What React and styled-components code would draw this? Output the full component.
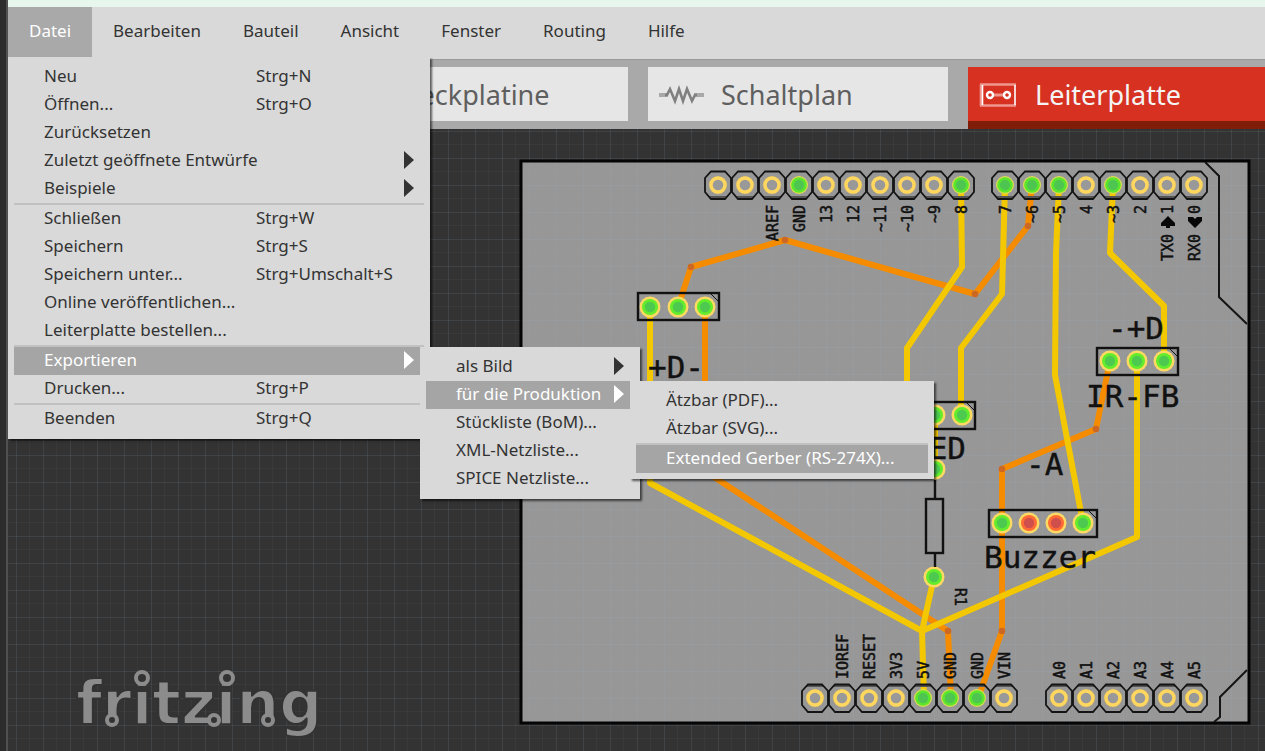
import React from 'react';
import styled, { createGlobalStyle, css } from 'styled-components';

const GlobalStyle = createGlobalStyle`
  * { box-sizing: border-box; }
  body {
    margin: 0;
    background: #2c2c2c;
    font-family: "Noto Sans", "Open Sans", sans-serif;
    font-size: 17px;
    line-height: 26px;
    color: #333;
  }
  button { font: inherit; color: inherit; border: 0; background: none; text-align: left; }
  ul { list-style: none; margin: 0; padding: 0; }
`;

const AppWindow = styled.div`
  display: flex;
  flex-direction: column;
  min-height: 100vh;
  margin-left: 6px;
  border-left: 2px solid #505050;
  overflow: hidden;
`;

const TitleStrip = styled.div`
  flex: none;
  height: 7px;
  background: #e8f7ed;
`;

const MenuBar = styled.nav`
  position: relative;
  z-index: 2;
  display: flex;
  flex: none;
  height: 52px;
  background: #d9d9d9;
`;

const MenuBarButton = styled.button`
  height: 50px;
  padding: 0 21px 2px 21px;
  ${(p) => p.$open && css`background: #a9a9a9; color: #fff;`}
`;

const MenuList = styled.ul`
  position: absolute;
  z-index: 1;
  top: ${(p) => (p.$root ? '50px' : '0')};
  left: ${(p) => (p.$root ? '0' : 'calc(100% - 4px)')};
  width: ${(p) => p.$width}px;
  padding: 6px;
  background: #d9d9d9;
  box-shadow: 2px 2px 2px rgba(0, 0, 0, 0.6);
`;

const MenuItem = styled.li`
  position: relative;
`;

const MenuButton = styled.button`
  display: flex;
  align-items: center;
  width: 100%;
  height: 28px;
  padding: 0 10px 2px 30px;
  white-space: nowrap;
  ${(p) => p.$active && css`background: #a5a5a5; color: #fff;`}
`;

const MenuLabel = styled.span`
  flex: ${(p) => (p.$fixed ? '0 0 212px' : '1')};
`;

const MenuDivider = styled.li`
  height: 2px;
  background: #c1c1c1;
`;

const TabBar = styled.div`
  display: flex;
  flex: none;
  gap: 20px;
  height: 70px;
  padding: 7px 0 0 320px;
  border-top: 1px solid #999;
  background: #a9a9a9;
`;

const Tab = styled.button`
  display: flex;
  align-items: center;
  flex: none;
  gap: 17px;
  width: 300px;
  height: 54px;
  padding: 2px 0 0 10px;
  background: #e6e6e6;
  color: #5f5f5f;
  font-size: 27px;
  ${(p) => p.$active && css`
    flex: 1 0 297px;
    height: 62px;
    border-bottom: 8px solid #801d09;
    background: #d63121;
    color: #f4f4f4;
  `}
`;

const Canvas = styled.main`
  position: relative;
  flex: 1;
  min-height: 600px;
  background: #333;
`;

const BoardDrawing = styled.svg`
  position: absolute;
  inset: 0;
  width: 100%;
  height: 100%;
`;

const Logo = styled.svg`
  position: absolute;
  left: 52px;
  bottom: 0;
`;

const Silk = styled.text`
  font-family: "DejaVu Sans Mono", monospace;
  font-size: ${(p) => (p.$small ? 15 : 31)}px;
  fill: #111;
  stroke: #111;
  stroke-width: ${(p) => (p.$small ? 0.5 : 0.4)};
`;

const Wordmark = styled.text`
  font-family: "DejaVu Sans", sans-serif;
  font-weight: bold;
  font-size: 60px;
  fill: #8c8c8c;
  stroke: #333;
  stroke-width: 2;
  stroke-linejoin: round;
`;

const productionMenu = [
  { label: 'Ätzbar (PDF)...' },
  { label: 'Ätzbar (SVG)...' },
  null,
  { label: 'Extended Gerber (RS-274X)...', active: true },
];

const exportMenu = [
  { label: 'als Bild', arrow: true },
  { label: 'für die Produktion', arrow: true, active: true, sub: productionMenu, subWidth: 304 },
  { label: 'Stückliste (BoM)...' },
  { label: 'XML-Netzliste...' },
  { label: 'SPICE Netzliste...' },
];

const fileMenu = [
  { label: 'Neu', keys: 'Strg+N' },
  { label: 'Öffnen...', keys: 'Strg+O' },
  { label: 'Zurücksetzen' },
  { label: 'Zuletzt geöffnete Entwürfe', arrow: true },
  { label: 'Beispiele', arrow: true },
  null,
  { label: 'Schließen', keys: 'Strg+W' },
  { label: 'Speichern', keys: 'Strg+S' },
  { label: 'Speichern unter...', keys: 'Strg+Umschalt+S' },
  { label: 'Online veröffentlichen...' },
  { label: 'Leiterplatte bestellen...' },
  null,
  { label: 'Exportieren', arrow: true, active: true, sub: exportMenu, subWidth: 220 },
  { label: 'Drucken...', keys: 'Strg+P' },
  null,
  { label: 'Beenden', keys: 'Strg+Q' },
];

function Menu({ items, width, root }) {
  return (
    <MenuList $width={width} $root={root}>
      {items.map((item, i) =>
        item ? (
          <MenuItem key={i}>
            <MenuButton $active={item.active}>
              <MenuLabel $fixed={Boolean(item.keys)}>{item.label}</MenuLabel>
              {item.keys && <span>{item.keys}</span>}
              {item.arrow && (
                <svg width="10" height="18" aria-hidden="true">
                  <path d="M0 0L10 9L0 18Z" fill="currentColor" />
                </svg>
              )}
            </MenuButton>
            {item.sub && <Menu items={item.sub} width={item.subWidth} />}
          </MenuItem>
        ) : (
          <MenuDivider key={i} />
        )
      )}
    </MenuList>
  );
}

const ResistorIcon = () => (
  <svg width="46" height="20" viewBox="0 0 46 20" fill="none" stroke="#808080" aria-hidden="true">
    <path d="M1 10H10M36 10H46" stroke="#a8a8a8" strokeWidth="4" />
    <path d="M7 10H9L12 4L17 16L21 4L25 16L29 4L34 16L37 10H39" strokeWidth="2.6" />
  </svg>
);

const PcbIcon = () => (
  <svg width="40" height="24" viewBox="0 0 40 24" fill="none" aria-hidden="true">
    <path d="M2 1.5H38M2 22.5H38M3 1V23" stroke="#ee968d" strokeWidth="2.600" />
    <path d="M4.500 2V22M37 2V22" stroke="#fff" strokeWidth="1.600" />
    <path d="M15 12H26" stroke="#ee968d" strokeWidth="3" />
    <circle cx="12" cy="12" r="3" stroke="#fff" strokeWidth="2.4" />
    <circle cx="29" cy="12" r="3" stroke="#fff" strokeWidth="2.4" />
  </svg>
);

const BreadboardIcon = () => (
  <svg width="40" height="20" viewBox="0 0 40 20" fill="#858585" aria-hidden="true">
    {[2, 11, 20, 29].map((x) => <rect key={x} x={x} y="6" width="5" height="8" />)}
  </svg>
);

const topPins = [
  [718], [745], [772, 'AREF'], [799, 'GND', 'on'], [826, '13'], [853, '12'], [880, '~11'],
  [907, '~10'], [934, '~9'], [961, '8', 'on'], [1005, '7', 'on'], [1032, '~6', 'on'],
  [1059, '~5', 'on'], [1086, '4'], [1113, '~3', 'on'], [1140, '2'], [1167, '1'], [1194, '0'],
];

const bottomPins = [
  [815], [842, 'IOREF'], [869, 'RESET'], [896, '3V3'], [923, '5V', 'on'], [950, 'GND', 'on'],
  [977, 'GND', 'on'], [1004, 'VIN'], [1059, 'A0'], [1086, 'A1'], [1113, 'A2'], [1140, 'A3'],
  [1167, 'A4'], [1194, 'A5'],
];

const orangeTraces = [
  '678,307 691,267 785,240 975,294 1028,226 1032,185',
  '705,307 705,471 948,631 951,698',
  '1110,361 1096,429 1002,469 1002,631 978,698',
];

const yellowTraces = [
  '961,185 962,267 907,348 907,390 935,415 935,469',
  '1005,185 1002,294 961,348 961,415',
  '1059,185 1056,253 1055,375 1083,523',
  '1113,185 1110,253 1164,306 1164,361',
  '1137,361 1137,537 922,631',
  '650,307 650,483 922,631 924,698',
  '934,577 922,631',
];

const vias = [[691, 267], [785, 240], [975, 294], [1028, 226], [948, 631], [1096, 429], [1002, 469], [1002, 631]];

const solderPads = [
  [650, 307], [678, 307], [705, 307], [1110, 361], [1137, 361], [1164, 361], [935, 415], [962, 415],
  [935, 469], [934, 577], [1002, 523], [1029, 523, 'open'], [1056, 523, 'open'], [1083, 523],
];

function HeaderPin({ x, y, on, flip }) {
  return (
    <g transform={`translate(${x} ${y})`}>
      <path d={flip ? 'M-9 -11L-6 -14H6L9 -11Z' : 'M-9 11L-6 14H6L9 11Z'} fill="#555" />
      <path d="M-13 -7L-7 -13.500H7L13 -7V7L7 14H-7L-13 7Z" fill="none" stroke="#141414" strokeWidth="1.800" />
      {on ? (
        <>
          <circle r="9" fill="#dfdc50" />
          <circle r="7.800" fill="#5be62c" />
          <circle r="5.200" fill="#4fc551" />
        </>
      ) : (
        <>
          <circle r="9.300" fill="#b3a67d" />
          <circle r="7" fill="#999" stroke="#ffd75f" strokeWidth="3.400" />
        </>
      )}
    </g>
  );
}

function SolderPad({ x, y, open }) {
  return (
    <g transform={`translate(${x} ${y})`}>
      <circle r="10.500" fill="#ffda62" />
      <circle r="8" fill={open ? '#ff6a35' : '#62ec2b'} />
      <circle r="5.200" fill={open ? '#cf4f4c' : '#4dc950'} />
    </g>
  );
}

function SilkPinLabel({ x, y, anchor, children }) {
  return (
    <Silk $small textAnchor={anchor} transform={`translate(${x} ${y}) rotate(-90)`}>
      {children}
    </Silk>
  );
}

function Board() {
  return (
    <BoardDrawing role="img" aria-label="Leiterplatte">
      <defs>
        <pattern id="grid" x="448" y="158" width="27" height="27" patternUnits="userSpaceOnUse">
          <path d="M13.500 0V27M0 13.500H27" stroke="#aab4c4" strokeOpacity=".05" />
          <path d="M.5 0V27M0 .5H27" stroke="#a0b4d2" strokeOpacity=".12" />
        </pattern>
      </defs>
      <g transform="translate(-8 -129)">
        <rect x="520" y="160" width="729" height="563" fill="#979797" />
        <rect width="4000" height="3000" fill="url(#grid)" />
        <rect x="521" y="161" width="728" height="562" fill="none" stroke="#050505" strokeWidth="3" />
        <path
          d="M1205 162L1219 176V297L1247 324M1247 670L1220 697V717L1214 722"
          fill="none" stroke="#151515" strokeWidth="2"
        />
        <g fill="none" strokeWidth="6" strokeLinecap="round" strokeLinejoin="round">
          <g stroke="#f58c00">{orangeTraces.map((t) => <polyline key={t} points={t} />)}</g>
          <g stroke="#f3c800">{yellowTraces.map((t) => <polyline key={t} points={t} />)}</g>
        </g>
        {vias.map(([x, y]) => <circle key={`${x}-${y}`} cx={x} cy={y} r="3.300" fill="#cd6824" />)}
        {topPins.map(([x, , on]) => <HeaderPin key={x} x={x} y={185} on={on} />)}
        {bottomPins.map(([x, , on]) => <HeaderPin key={x} x={x} y={698} on={on} flip />)}
        {solderPads.map(([x, y, open]) => <SolderPad key={`${x}-${y}`} x={x} y={y} open={open} />)}
        <g fill="none" stroke="#111" strokeWidth="2.400">
          <rect x="638" y="293" width="81" height="27" />
          <rect x="1097" y="348" width="81" height="27" />
          <rect x="922" y="402" width="53" height="27" />
          <rect x="989" y="510" width="108" height="27" />
          <rect x="926" y="499" width="17" height="54" />
          <path d="M935 480V499M935 553V567" />
          <path d="M711 294L718 301M1170 349L1177 356M967 403L974 410M1089 511L1096 518" strokeWidth="1" />
        </g>
        {topPins.map(([x, name]) => name && (
          <SilkPinLabel key={x} x={x + 6} y={205} anchor="end">{name}</SilkPinLabel>
        ))}
        {bottomPins.map(([x, name]) => name && (
          <SilkPinLabel key={x} x={x + 6} y={679} anchor="start">{name}</SilkPinLabel>
        ))}
        <SilkPinLabel x={1173} y={234} anchor="end">TX0</SilkPinLabel>
        <SilkPinLabel x={1200} y={234} anchor="end">RX0</SilkPinLabel>
        <g fill="#080808">
          <path d="M1168 216L1175 223V226H1170V228H1166V226H1161V223Z" />
          <path d="M1195 228L1202 221V217H1197L1195 219L1193 217H1188V221Z" />
        </g>
        <Silk x="648" y="378">+D-</Silk>
        <Silk x="1108" y="339">-+D</Silk>
        <Silk x="1086" y="407">IR-FB</Silk>
        <Silk x="1026" y="475">-A</Silk>
        <Silk x="966" y="459" textAnchor="end">LED</Silk>
        <Silk x="984" y="568">Buzzer</Silk>
        <Silk $small transform="translate(955 588) rotate(90)">R1</Silk>
      </g>
    </BoardDrawing>
  );
}

function FritzingLogo() {
  return (
    <Logo width="280" height="90" role="img" aria-label="fritzing">
      <Wordmark x="16" y="63">fritzing</Wordmark>
      <g fill="#333" stroke="#8c8c8c" strokeWidth="4">
        <circle cx="52" cy="59" r="5" />
        <circle cx="82" cy="17" r="6" />
        <circle cx="154" cy="59" r="5" />
        <circle cx="167" cy="17" r="6" />
        <circle cx="208" cy="59" r="5" />
      </g>
    </Logo>
  );
}

export default function App() {
  return (
    <>
      <GlobalStyle />
      <AppWindow>
        <TitleStrip />
        <MenuBar>
          <MenuBarButton $open>Datei</MenuBarButton>
          {['Bearbeiten', 'Bauteil', 'Ansicht', 'Fenster', 'Routing', 'Hilfe'].map((name) => (
            <MenuBarButton key={name}>{name}</MenuBarButton>
          ))}
          <Menu items={fileMenu} width={422} root />
        </MenuBar>
        <TabBar>
          <Tab><BreadboardIcon />Steckplatine</Tab>
          <Tab><ResistorIcon />Schaltplan</Tab>
          <Tab $active><PcbIcon />Leiterplatte</Tab>
        </TabBar>
        <Canvas>
          <Board />
          <FritzingLogo />
        </Canvas>
      </AppWindow>
    </>
  );
}
